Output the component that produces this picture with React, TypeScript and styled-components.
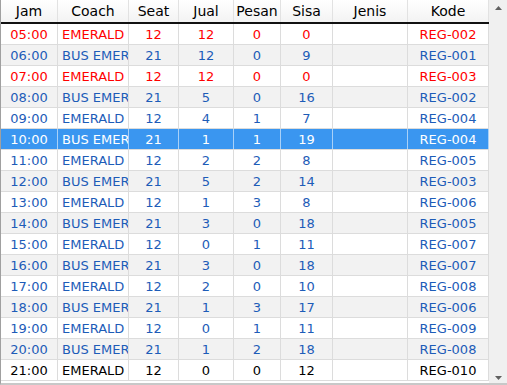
import React from 'react';
import styled, { createGlobalStyle } from 'styled-components';

type Tone = 'red' | 'blue' | 'black';

type Trip = {
  jam: string;
  coach: string;
  seat: number;
  jual: number;
  pesan: number;
  sisa: number;
  jenis: string;
  kode: string;
  tone: Tone;
};

const BUS = 'BUS EMERALD';
const EM = 'EMERALD';

const trips: Trip[] = [
  { jam: '05:00', coach: EM, seat: 12, jual: 12, pesan: 0, sisa: 0, jenis: '', kode: 'REG-002', tone: 'red' },
  { jam: '06:00', coach: BUS, seat: 21, jual: 12, pesan: 0, sisa: 9, jenis: '', kode: 'REG-001', tone: 'blue' },
  { jam: '07:00', coach: EM, seat: 12, jual: 12, pesan: 0, sisa: 0, jenis: '', kode: 'REG-003', tone: 'red' },
  { jam: '08:00', coach: BUS, seat: 21, jual: 5, pesan: 0, sisa: 16, jenis: '', kode: 'REG-002', tone: 'blue' },
  { jam: '09:00', coach: EM, seat: 12, jual: 4, pesan: 1, sisa: 7, jenis: '', kode: 'REG-004', tone: 'blue' },
  { jam: '10:00', coach: BUS, seat: 21, jual: 1, pesan: 1, sisa: 19, jenis: '', kode: 'REG-004', tone: 'blue' },
  { jam: '11:00', coach: EM, seat: 12, jual: 2, pesan: 2, sisa: 8, jenis: '', kode: 'REG-005', tone: 'blue' },
  { jam: '12:00', coach: BUS, seat: 21, jual: 5, pesan: 2, sisa: 14, jenis: '', kode: 'REG-003', tone: 'blue' },
  { jam: '13:00', coach: EM, seat: 12, jual: 1, pesan: 3, sisa: 8, jenis: '', kode: 'REG-006', tone: 'blue' },
  { jam: '14:00', coach: BUS, seat: 21, jual: 3, pesan: 0, sisa: 18, jenis: '', kode: 'REG-005', tone: 'blue' },
  { jam: '15:00', coach: EM, seat: 12, jual: 0, pesan: 1, sisa: 11, jenis: '', kode: 'REG-007', tone: 'blue' },
  { jam: '16:00', coach: BUS, seat: 21, jual: 3, pesan: 0, sisa: 18, jenis: '', kode: 'REG-007', tone: 'blue' },
  { jam: '17:00', coach: EM, seat: 12, jual: 2, pesan: 0, sisa: 10, jenis: '', kode: 'REG-008', tone: 'blue' },
  { jam: '18:00', coach: BUS, seat: 21, jual: 1, pesan: 3, sisa: 17, jenis: '', kode: 'REG-006', tone: 'blue' },
  { jam: '19:00', coach: EM, seat: 12, jual: 0, pesan: 1, sisa: 11, jenis: '', kode: 'REG-009', tone: 'blue' },
  { jam: '20:00', coach: BUS, seat: 21, jual: 1, pesan: 2, sisa: 18, jenis: '', kode: 'REG-008', tone: 'blue' },
  { jam: '21:00', coach: EM, seat: 12, jual: 0, pesan: 0, sisa: 12, jenis: '', kode: 'REG-010', tone: 'black' },
];

const SELECTED = 5;

const toneColor: Record<Tone, string> = {
  red: '#ff0000',
  blue: '#1d5cb8',
  black: '#000000',
};

// Jam, Coach, Seat, Jual, Pesan, Sisa, Jenis, Kode
const COLS = '57px 71px 50px 55px 47px 52px 75px 81px';

const GlobalStyle = createGlobalStyle`
  html, body {
    margin: 0;
    padding: 0;
    background: #ffffff;
  }
  body {
    font-family: "DejaVu Sans", "Liberation Sans", sans-serif;
  }
`;

const Frame = styled.div`
  width: 507px;
  height: 385px;
  box-sizing: border-box;
  display: flex;
  border-left: 1px solid #a0a0a0;
  border-bottom: 2px solid #c8c8c8;
  overflow: hidden;
`;

const Grid = styled.div`
  width: 488px;
  display: flex;
  flex-direction: column;
  overflow: hidden;
`;

const HeaderRow = styled.div`
  display: grid;
  grid-template-columns: ${COLS};
  height: 24px;
  box-sizing: border-box;
  border-bottom: 2px solid #111111;
  background: linear-gradient(#ffffff, #f3f3f3);
`;

const HeadCell = styled.div`
  display: flex;
  align-items: center;
  justify-content: center;
  font-size: 14px;
  color: #000000;
  border-right: 1px solid #e2e2e2;
  box-sizing: border-box;
  padding-bottom: 1px;
`;

const Row = styled.div<{ $alt: boolean; $selected: boolean; $tone: Tone }>`
  display: grid;
  grid-template-columns: ${COLS};
  height: 21px;
  box-sizing: border-box;
  border-bottom: 1px solid #dcdcdc;
  background: ${(p) => (p.$selected ? '#3a96f0' : p.$alt ? '#f2f2f2' : '#ffffff')};
  color: ${(p) => (p.$selected ? '#ffffff' : toneColor[p.$tone])};
`;

const Cell = styled.div<{ $align?: 'left' | 'center'; $selected?: boolean }>`
  display: flex;
  align-items: center;
  justify-content: ${(p) => (p.$align === 'left' ? 'flex-start' : 'center')};
  padding-left: ${(p) => (p.$align === 'left' ? '4px' : '0')};
  font-size: 13px;
  white-space: nowrap;
  overflow: hidden;
  box-sizing: border-box;
  border-right: 1px solid ${(p) => (p.$selected ? '#a9d1f8' : '#dcdcdc')};
`;

const ScrollBar = styled.div`
  width: 18px;
  flex: none;
  background: #f0f0f0;
  display: flex;
  flex-direction: column;
  justify-content: space-between;
  align-items: center;
  padding: 6px 0 3px;
  box-sizing: border-box;
`;

const Arrow = ({ up }: { up?: boolean }) => (
  <svg width="7" height="4" viewBox="0 0 7 4">
    <path d={up ? 'M0 4 L3.5 0 L7 4 Z' : 'M0 0 L3.5 4 L7 0 Z'} fill="#606060" />
  </svg>
);

const headers = ['Jam', 'Coach', 'Seat', 'Jual', 'Pesan', 'Sisa', 'Jenis', 'Kode'];

export default function App() {
  return (
    <>
      <GlobalStyle />
      <Frame>
        <Grid>
          <HeaderRow>
            {headers.map((h) => (
              <HeadCell key={h}>{h}</HeadCell>
            ))}
          </HeaderRow>
          {trips.map((t, i) => {
            const sel = i === SELECTED;
            return (
              <Row key={t.jam} $alt={i % 2 === 1} $selected={sel} $tone={t.tone}>
                <Cell $selected={sel}>{t.jam}</Cell>
                <Cell $selected={sel} $align="left">{t.coach}</Cell>
                <Cell $selected={sel}>{t.seat}</Cell>
                <Cell $selected={sel}>{t.jual}</Cell>
                <Cell $selected={sel}>{t.pesan}</Cell>
                <Cell $selected={sel}>{t.sisa}</Cell>
                <Cell $selected={sel}>{t.jenis}</Cell>
                <Cell $selected={sel}>{t.kode}</Cell>
              </Row>
            );
          })}
        </Grid>
        <ScrollBar>
          <Arrow up />
          <Arrow />
        </ScrollBar>
      </Frame>
    </>
  );
}
